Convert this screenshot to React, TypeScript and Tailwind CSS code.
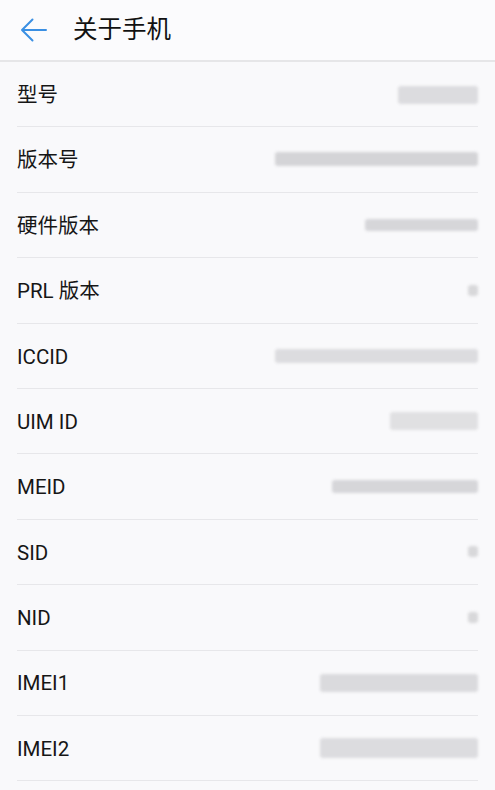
import React from "react";

type Bar = { w: number; h: number; dy?: number; shade?: string };
type Row = { label: string; bars: Bar };

const rows: Row[] = [
  { label: "型号", bars: { w: 80, h: 18, dy: 1, shade: "bg-[#dcdcdf]" } },
  { label: "版本号", bars: { w: 203, h: 14, dy: -1, shade: "bg-[#d4d4d7]" } },
  { label: "硬件版本", bars: { w: 113, h: 12, shade: "bg-[#d6d6d9]" } },
  { label: "PRL 版本", bars: { w: 10, h: 11, shade: "bg-[#d8d8da]" } },
  { label: "ICCID", bars: { w: 203, h: 14, shade: "bg-[#dcdcdf]" } },
  { label: "UIM ID", bars: { w: 88, h: 18, shade: "bg-[#e0e0e2]" } },
  { label: "MEID", bars: { w: 146, h: 13, dy: -1, shade: "bg-[#d6d6d9]" } },
  { label: "SID", bars: { w: 10, h: 11, shade: "bg-[#d8d8da]" } },
  { label: "NID", bars: { w: 10, h: 11, shade: "bg-[#d8d8da]" } },
  { label: "IMEI1", bars: { w: 158, h: 18, shade: "bg-[#dadadd]" } },
  { label: "IMEI2", bars: { w: 158, h: 20, shade: "bg-[#dcdcdf]" } },
];

export default function App() {
  return (
    <div
      className="w-[495px] h-[790px] overflow-hidden bg-[#f9f9fb] text-[#1a1a1a]"
      style={{ fontFamily: 'Roboto, "Noto Sans CJK SC", sans-serif' }}
    >
      <div className="h-[62px] flex items-center border-b-2 border-[#e6e6e8] bg-[#fbfbfd]">
        <div className="w-[73px] flex items-center pl-[20px] shrink-0">
          <svg width="27" height="24" viewBox="0 0 27 24" fill="none">
            <path
              d="M26 12H2M12.5 1.5L2 12l10.5 10.5"
              stroke="#3a8fe3"
              strokeWidth="2"
              strokeLinecap="round"
              strokeLinejoin="round"
            />
          </svg>
        </div>
        <span className="text-[24.5px] leading-none text-[#111]">关于手机</span>
      </div>
      <div className="px-[17px]">
        {rows.map((r) => (
          <div
            key={r.label}
            className="h-[65.4px] flex items-center justify-between border-b border-[#e7e7ea]"
          >
            <span className="text-[20.5px] leading-none text-[#161616] mt-[2px]">{r.label}</span>
            <div
              className={`${r.bars.shade} blur-[1.5px] rounded-[3px]`}
              style={{ width: r.bars.w, height: r.bars.h, marginTop: r.bars.dy ?? 0 }}
            />
          </div>
        ))}
      </div>
    </div>
  );
}
